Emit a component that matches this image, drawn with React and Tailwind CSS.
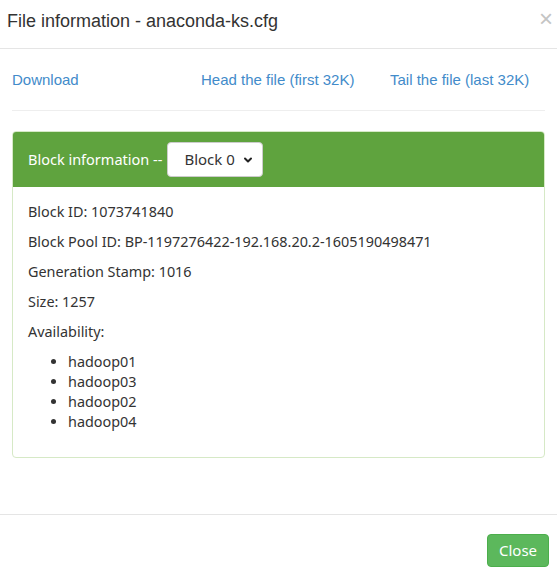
import { ChevronDown } from 'lucide-react';

const hosts = ['hadoop01', 'hadoop03', 'hadoop02', 'hadoop04'];

const facts = [
  'Block ID: 1073741840',
  'Block Pool ID: BP-1197276422-192.168.20.2-1605190498471',
  'Generation Stamp: 1016',
  'Size: 1257',
  'Availability:',
];

export default function App() {
  return (
    <div className="flex h-[576px] w-[557px] flex-col bg-white text-[#333]">
      <div className="flex h-[49px] items-start justify-between border-b border-[#e5e5e5] pl-[7px] pr-[4px] pt-[8px]">
        <h4 className="text-[18px] leading-[26px] text-[#333]" style={{ fontFamily: '"Liberation Sans", Arial, sans-serif' }}>
          File information - anaconda-ks.cfg
        </h4>
        <span className="mt-[-2px] text-[24px] leading-[26px] text-[#c4c4c4]" style={{ fontFamily: '"Liberation Sans", Arial, sans-serif' }}>
          ×
        </span>
      </div>

      <div className="px-[12px]">
        <div
          className="flex h-[61px] items-end pb-[20px] text-[15px] leading-[20px] text-[#428bca]"
          style={{ fontFamily: '"Liberation Sans", Arial, sans-serif' }}
        >
          <a href="#" className="w-[189px]">Download</a>
          <a href="#" className="w-[189px]">Head the file (first 32K)</a>
          <a href="#">Tail the file (last 32K)</a>
        </div>
        <hr className="border-t border-[#eee]" />

        <div
          className="mt-[20px] overflow-hidden rounded-[4px] border border-[#d6e9c6] text-[14.4px]"
          style={{ fontFamily: '"Noto Sans", sans-serif' }}
        >
          <div className="flex items-center bg-[#5fa33e] px-[15px] py-[10px] text-white">
            <span className="mr-[5px] text-[14.5px]">Block information --</span>
            <div className="relative">
              <select className="h-[35px] w-[96px] appearance-none rounded-[4px] border border-[#ccc] bg-white pl-[16px] text-[15px] text-[#333]">
                <option>Block 0</option>
              </select>
              <ChevronDown className="pointer-events-none absolute right-[9px] top-[12px] h-[12px] w-[12px] text-[#222]" strokeWidth={4} />
            </div>
          </div>
          <div className="px-[15px] pb-[15px] pt-[15px] text-[#333]">
            {facts.map((f) => (
              <p key={f} className="mb-[10px] leading-[20px]">{f}</p>
            ))}
            <ul className="mb-[10px] list-disc pl-[40px] leading-[20px]">
              {hosts.map((h) => (
                <li key={h}>{h}</li>
              ))}
            </ul>
          </div>
        </div>
      </div>

      <div className="mt-auto flex h-[62px] justify-end border-t border-[#e5e5e5] px-[8px] pt-[19px]">
        <button
          className="h-[33px] w-[62px] rounded-[4px] border border-[#4cae4c] bg-[#5cb85c] text-[15px] text-white"
          style={{ fontFamily: '"Noto Sans", sans-serif' }}
        >
          Close
        </button>
      </div>
    </div>
  );
}
